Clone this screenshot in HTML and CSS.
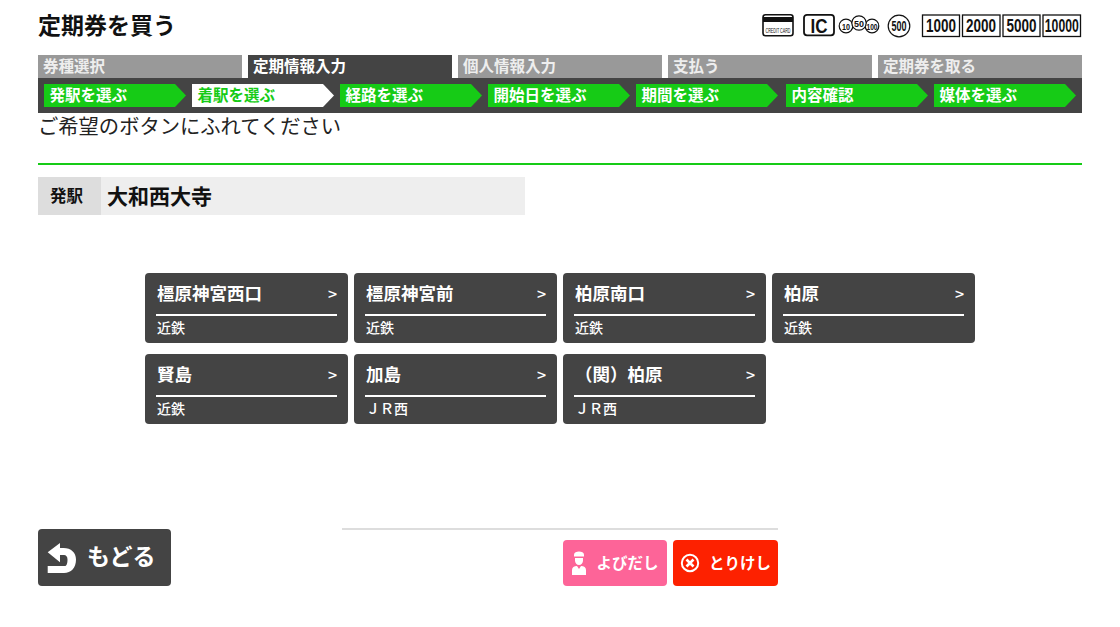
FILE: index.html
```html
<!DOCTYPE html>
<html lang="ja">
<head>
<meta charset="utf-8">
<title>定期券を買う</title>
<link rel="stylesheet" href="styles.css">
</head>
<body>
<div class="page">
  <header class="header">
    <h1 class="title">定期券を買う</h1>
    <div class="pay">
      <svg class="pay-svg" width="320" height="26" viewBox="0 0 320 26">
        <rect x="1" y="2.800" width="30" height="21" rx="2.500" fill="#fff" stroke="#111" stroke-width="1.600"/>
        <rect x="1" y="5" width="30" height="5" fill="#111"/>
        <text x="16" y="20.500" class="t-card" textLength="25" lengthAdjust="spacingAndGlyphs">CREDIT CARD</text>
        <rect x="42" y="2.800" width="30" height="20.500" rx="3" fill="#fff" stroke="#111" stroke-width="1.800"/>
        <text x="57" y="20.500" class="t-ic" textLength="17" lengthAdjust="spacingAndGlyphs">IC</text>
        <circle cx="84" cy="14" r="6.800" class="coin"/>
        <circle cx="110" cy="14" r="6.800" class="coin"/>
        <circle cx="97" cy="11" r="7.200" class="coin"/>
        <text x="84" y="17.500" class="t-coin" textLength="8" lengthAdjust="spacingAndGlyphs">10</text>
        <text x="97" y="14.500" class="t-coin" textLength="10" lengthAdjust="spacingAndGlyphs">50</text>
        <text x="110" y="17.500" class="t-coin" textLength="11" lengthAdjust="spacingAndGlyphs">100</text>
        <circle cx="137" cy="14" r="10.800" class="coin"/>
        <text x="137" y="19" class="t-500" textLength="15" lengthAdjust="spacingAndGlyphs">500</text>
        <rect x="160.500" y="3" width="37" height="21.500" class="note"/>
        <text x="179" y="20" class="t-note" textLength="30" lengthAdjust="spacingAndGlyphs">1000</text>
        <rect x="200.500" y="3" width="37.500" height="21.500" class="note"/>
        <text x="219" y="20" class="t-note" textLength="30" lengthAdjust="spacingAndGlyphs">2000</text>
        <rect x="241" y="3" width="37" height="21.500" class="note"/>
        <text x="259.500" y="20" class="t-note" textLength="30" lengthAdjust="spacingAndGlyphs">5000</text>
        <rect x="281" y="3" width="37.500" height="21.500" class="note"/>
        <text x="299.800" y="20" class="t-note" textLength="34" lengthAdjust="spacingAndGlyphs">10000</text>
      </svg>
    </div>
  </header>

  <nav class="progress">
    <div class="tabs">
      <div class="tab">券種選択</div>
      <div class="tab tab-active">定期情報入力</div>
      <div class="tab">個人情報入力</div>
      <div class="tab">支払う</div>
      <div class="tab">定期券を取る</div>
    </div>
    <div class="steps">
      <div class="step">発駅を選ぶ</div>
      <div class="step step-active">着駅を選ぶ</div>
      <div class="step">経路を選ぶ</div>
      <div class="step">開始日を選ぶ</div>
      <div class="step">期間を選ぶ</div>
      <div class="step step-wide">内容確認</div>
      <div class="step">媒体を選ぶ</div>
    </div>
  </nav>

  <p class="prompt">ご希望のボタンにふれてください</p>

  <div class="station">
    <div class="station-label">発駅</div>
    <div class="station-name">大和西大寺</div>
  </div>

  <div class="grid">
    <button class="card"><span class="card-top"><span>橿原神宮西口</span><span class="chev">&gt;</span></span><span class="card-line">近鉄</span></button>
    <button class="card"><span class="card-top"><span>橿原神宮前</span><span class="chev">&gt;</span></span><span class="card-line">近鉄</span></button>
    <button class="card"><span class="card-top"><span>柏原南口</span><span class="chev">&gt;</span></span><span class="card-line">近鉄</span></button>
    <button class="card"><span class="card-top"><span>柏原</span><span class="chev">&gt;</span></span><span class="card-line">近鉄</span></button>
    <button class="card"><span class="card-top"><span>賢島</span><span class="chev">&gt;</span></span><span class="card-line">近鉄</span></button>
    <button class="card"><span class="card-top"><span>加島</span><span class="chev">&gt;</span></span><span class="card-line">ＪＲ西</span></button>
    <button class="card"><span class="card-top"><span>（関）柏原</span><span class="chev">&gt;</span></span><span class="card-line">ＪＲ西</span></button>
  </div>

  <footer class="footer">
    <button class="back">
      <svg width="30" height="30" viewBox="0 0 30 30" class="back-icon"><path d="M.7 9.300 13 0v5h3.500C24 5 29 9.500 29 16.500 29 25 24 30 17 30H.7v-7H18c1.500 0 2.500-2.500 2.500-6.500 0-3-1.500-4.500-3.500-4.500h-4v7.300z" fill="#fff"/></svg>
      <span class="back-label">もどる</span>
    </button>
    <div class="actions">
      <div class="action-row">
        <button class="action action-call">
          <svg width="16" height="24" viewBox="0 0 16 24"><path d="M3 3.500C3 1.500 5.500.500 8 .500s5 1 5 3v2H3z" fill="#fff"/><path d="M4 7h8v2.500c0 2.500-1.800 4.500-4 4.500s-4-2-4-4.500z" fill="#fff"/><path d="M1 24v-5c0-2.500 2-4 5-4l2 3 2-3c3 0 5 1.500 5 4v5z" fill="#fff"/></svg>
          <span class="action-label">よびだし</span>
        </button>
        <button class="action action-cancel">
          <svg width="20" height="20" viewBox="0 0 20 20"><circle cx="10" cy="10" r="8.200" fill="none" stroke="#fff" stroke-width="2"/><path d="M6.500 6.500l7 7m0-7l-7 7" stroke="#fff" stroke-width="2.600"/></svg>
          <span class="action-label">とりけし</span>
        </button>
      </div>
    </div>
  </footer>
</div>
</body>
</html>
```

FILE: styles.css
```css
* { box-sizing: border-box; }
html, body { margin: 0; padding: 0; background: #fff; }
body {
  width: 1120px;
  height: 627px;
  overflow: hidden;
  font-family: "Noto Sans CJK JP", "Noto Sans", sans-serif;
  color: #111;
}
.page { padding: 0 38px; }
.header {
  height: 55px;
  display: flex;
  justify-content: space-between;
  align-items: flex-start;
}
.title {
  margin: 7px 0 0;
  font-size: 23px;
  line-height: 34px;
  font-weight: 700;
}
.pay { margin: 12px 0 0; }
.pay-svg { display: block; overflow: visible; }
.pay-svg text { font-family: "Liberation Sans Narrow", "Liberation Sans", sans-serif; text-anchor: middle; fill: #111; font-weight: 700; }
.pay-svg .t-card { font-size: 8px; font-weight: 400; }
.t-ic { font-size: 21px; }
.t-coin { font-size: 9px; }
.t-500 { font-size: 14px; }
.t-note { font-size: 18px; }
.coin { fill: #fff; stroke: #111; stroke-width: 1.200; }
.note { fill: #fff; stroke: #111; stroke-width: 1.300; }

.progress { width: 1044px; }
.tabs { display: flex; gap: 6px; height: 23px; }
.tab {
  flex: 0 0 204px;
  background: #999;
  color: #eee;
  font-size: 15.500px;
  font-weight: 700;
  line-height: 21px;
  padding-left: 5px;
}
.tab-active { background: #444; color: #fff; }
.steps {
  display: flex;
  gap: 6px;
  height: 35px;
  padding: 6px 6px;
  background: #444;
}
.step {
  flex: 0 0 142px;
  height: 23px;
  background: #16cb16;
  color: #fff;
  font-size: 15.500px;
  font-weight: 700;
  line-height: 21px;
  padding-left: 5.500px;
  clip-path: polygon(0 0, 131px 0, 100% 50%, 131px 100%, 0 100%);
}
.step-wide { margin-left: 2px; }
.step-active { background: #fff; color: #16cb16; }

.prompt {
  margin: 0;
  height: 52px;
  border-bottom: 2px solid #16cb16;
  font-size: 20.300px;
  line-height: 25px;
  color: #222;
}
.station {
  margin-top: 12px;
  width: 487px;
  height: 38px;
  display: flex;
  background: #eee;
  align-items: stretch;
}
.station-label {
  width: 63px;
  padding-left: 12px;
  background: #ddd;
  font-size: 16.500px;
  font-weight: 700;
  line-height: 36px;
}
.station-name {
  padding-left: 6px;
  font-size: 21px;
  font-weight: 700;
  line-height: 36px;
}

.grid {
  margin: 58px 0 0 107px;
  display: grid;
  grid-template-columns: repeat(4, 203px);
  grid-auto-rows: 70px;
  gap: 11px 6px;
}
.card {
  display: flex;
  flex-direction: column;
  justify-content: flex-start;
  padding: 0 11px;
  background: #444;
  border: 0;
  border-radius: 4px;
  color: #fff;
  font-family: inherit;
  text-align: left;
}
.card-top {
  display: flex;
  justify-content: space-between;
  align-items: center;
  width: 100%;
  height: 43px;
  border-bottom: 2px solid #fff;
  font-size: 17.500px;
  font-weight: 700;
  padding: 0 0 2px 1px;
}
.chev { font-size: 16px; font-weight: 500; }
.card-line {
  display: block;
  padding-left: 1px;
  font-size: 14px;
  font-weight: 500;
  line-height: 22px;
}

.footer {
  margin-top: 105px;
  display: flex;
  align-items: flex-start;
}
.back {
  width: 133px;
  height: 57px;
  display: flex;
  align-items: center;
  gap: 10px;
  padding: 0 0 0 9px;
  background: #444;
  border: 0;
  border-radius: 4px;
  color: #fff;
  font-family: inherit;
  font-size: 23px;
  font-weight: 700;
}
.back-icon { flex: none; }
.back-label { line-height: 50px; height: 50px; margin-bottom: 5px; }
.actions {
  margin: -1px 0 0 171px;
  width: 436px;
  border-top: 2px solid #ddd;
  padding-top: 10px;
}
.action-row {
  display: flex;
  justify-content: flex-end;
  gap: 6px;
}
.action {
  width: 104px;
  height: 46px;
  display: flex;
  align-items: center;
  justify-content: center;
  gap: 9px;
  padding: 0;
  border: 0;
  border-radius: 4px;
  color: #fff;
  font-family: inherit;
  font-size: 15.500px;
  font-weight: 700;
}
.action-label { margin-top: -2px; }
.action-call { background: #fd6498; }
.action-cancel { width: 105px; background: #fd2100; }
```
